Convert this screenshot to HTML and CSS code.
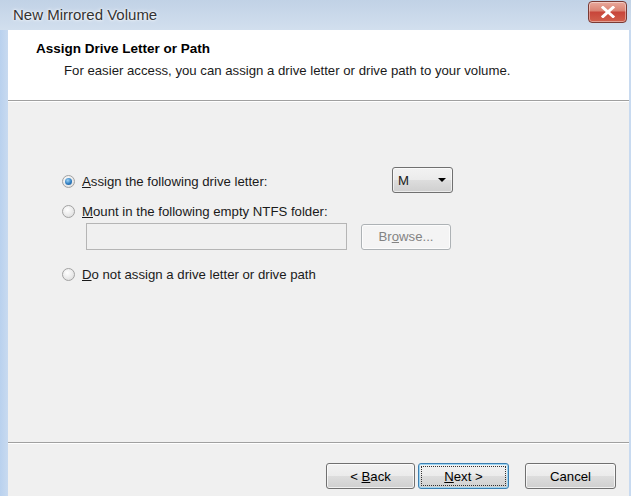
FILE: index.html
```html
<!DOCTYPE html>
<html lang="en">
<head>
    <meta charset="UTF-8">
    <title>New Mirrored Volume</title>
    <link rel="stylesheet" href="styles.css">
</head>
<body>

    <div class="window">
        <div class="titlebar">
            <span class="caption">New Mirrored Volume</span>
            <button class="close" aria-label="Close">
                <svg width="14" height="12" viewBox="0 0 14 12">
                    <path d="M2 1.5 L12 10.5 M12 1.5 L2 10.5" stroke="#fff" stroke-width="3" stroke-linecap="square"/>
                </svg>
            </button>
        </div>

        <div class="client">
            <div class="header">
                <h1>Assign Drive Letter or Path</h1>
                <p>For easier access, you can assign a drive letter or drive path to your volume.</p>
            </div>

            <div class="body">
                <div class="options">
                    <div class="row first">
                        <label class="option">
                            <span class="radio checked"></span>
                            <span><u>A</u>ssign the following drive letter:</span>
                        </label>
                        <div class="combo">
                            <span>M</span>
                            <span class="arrow"></span>
                        </div>
                    </div>
                    <div class="row second">
                        <label class="option">
                            <span class="radio"></span>
                            <span><u>M</u>ount in the following empty NTFS folder:</span>
                        </label>
                    </div>
                    <div class="row folder">
                        <div class="field"></div>
                        <div class="btn disabled"><span>Br<u>o</u>wse...</span></div>
                    </div>
                    <div class="row last">
                        <label class="option">
                            <span class="radio"></span>
                            <span><u>D</u>o not assign a drive letter or drive path</span>
                        </label>
                    </div>
                </div>
            </div>

            <div class="footer">
                <div class="btn"><span>&lt; <u>B</u>ack</span></div>
                <div class="btn default"><span class="focus"><span><u>N</u>ext &gt;</span></span></div>
                <div class="btn cancel"><span>Cancel</span></div>
            </div>
        </div>
    </div>

</body>
</html>
```

FILE: styles.css
```css
/* Wizard window */
body {
    margin: 0;
    padding: 0;
    font-family: "Liberation Sans", Arial, sans-serif;
    font-size: 13.2px;
    color: #1a1a1a;
}

.window {
    width: 631px;
    height: 496px;
    display: flex;
    flex-direction: column;
    background: linear-gradient(to right, #b9d1ee 0px, #c8daf0 8px, #c8daf0 100%);
    overflow: hidden;
}

.titlebar {
    height: 30px;
    display: flex;
    align-items: center;
    justify-content: space-between;
    background: linear-gradient(to bottom, #c1d2e6, #d2dfee);
    padding: 0 4px 0 13px;
    flex-shrink: 0;
}

.caption {
    font-size: 15px;
    color: #333;
    text-shadow: 0 0 4px #fff, 0 0 2px #fff;
    margin-top: -1px;
}

.close {
    width: 39px;
    height: 22px;
    margin-top: -6px;
    border: 1px solid #7a3a34;
    border-radius: 4px;
    background: linear-gradient(to bottom, #e9a99c 0%, #da8272 45%, #c8453a 50%, #d1604c 100%);
    display: flex;
    align-items: center;
    justify-content: center;
    padding: 0;
    box-shadow: inset 0 0 0 1px rgba(255, 255, 255, 0.4);
}

.client {
    flex: 1;
    margin: 0 2px 0 8px;
    display: flex;
    flex-direction: column;
    background: #f0f0f0;
}

.header {
    height: 71px;
    background: #fff;
    border-bottom: 1px solid #a0a0a0;
    padding: 11px 0 0 28px;
    box-sizing: border-box;
}

.header h1 {
    margin: 0;
    font-size: 13.5px;
    font-weight: bold;
    line-height: 16px;
    color: #000;
}

.header p {
    margin: 6px 0 0 28px;
    line-height: 15px;
}

.body {
    flex: 1;
    border-top: 1px solid #fff;
    border-bottom: 1px solid #a0a0a0;
}

.options {
    padding: 65px 0 0 54px;
}

.row {
    display: flex;
    align-items: center;
}

.row.first {
    align-items: flex-start;
}

.row.first .option {
    margin-top: 6px;
}

.option {
    display: flex;
    align-items: center;
    gap: 7px;
    width: 330px;
    height: 16px;
}

.row.second {
    margin-top: 10px;
}

.row.folder {
    margin-top: 4px;
    padding-left: 24px;
    gap: 14px;
}

.row.last {
    margin-top: 16px;
}

.radio {
    width: 13px;
    height: 13px;
    border-radius: 50%;
    border: 1px solid #a2a2a2;
    box-sizing: border-box;
    background: radial-gradient(circle at 40% 35%, #ffffff 0%, #e8e8e8 60%, #d6d6d6 100%);
    position: relative;
    flex-shrink: 0;
}

.radio.checked::after {
    content: "";
    position: absolute;
    left: 2px;
    top: 2px;
    width: 7px;
    height: 7px;
    border-radius: 50%;
    background: radial-gradient(circle at 40% 35%, #9fd3f5 0%, #2f7dc0 55%, #1c5590 100%);
}

.combo {
    width: 61px;
    height: 26px;
    box-sizing: border-box;
    border: 1px solid #707070;
    border-radius: 3px;
    background: linear-gradient(to bottom, #f2f2f2 0%, #ebebeb 50%, #dddddd 51%, #cfcfcf 100%);
    display: flex;
    align-items: center;
    justify-content: space-between;
    padding: 0 6px 0 5px;
    box-shadow: inset 0 0 0 1px rgba(255, 255, 255, 0.6);
}

.arrow {
    width: 0;
    height: 0;
    border-left: 4px solid transparent;
    border-right: 4px solid transparent;
    border-top: 4px solid #000;
}

.field {
    width: 261px;
    height: 27px;
    box-sizing: border-box;
    border: 1px solid #b5b5b5;
    background: #f0f0f0;
}

.btn {
    width: 89px;
    height: 26px;
    box-sizing: border-box;
    border: 1px solid #707070;
    border-radius: 3px;
    background: linear-gradient(to bottom, #f2f2f2 0%, #ebebeb 50%, #dddddd 51%, #cfcfcf 100%);
    box-shadow: inset 0 0 0 1px rgba(255, 255, 255, 0.7);
    display: flex;
    align-items: center;
    justify-content: center;
    color: #000;
}

.btn.disabled {
    width: 90px;
    border-color: #adb2b5;
    background: #f4f4f4;
    color: #838383;
}

.footer {
    height: 53px;
    display: flex;
    justify-content: flex-end;
    align-items: flex-start;
    padding: 19px 13px 0 0;
    box-sizing: border-box;
    border-top: 1px solid #fff;
}

.btn.default {
    width: 91px;
    margin-left: 3px;
    border-color: #3c7fb1;
    box-shadow: inset 0 0 0 1px #9fd6f3;
}

.focus {
    display: flex;
    align-items: center;
    justify-content: center;
    width: 83px;
    height: 18px;
    border: 1px dotted #333;
}

.btn.cancel {
    width: 91px;
    margin-left: 16px;
}
```
